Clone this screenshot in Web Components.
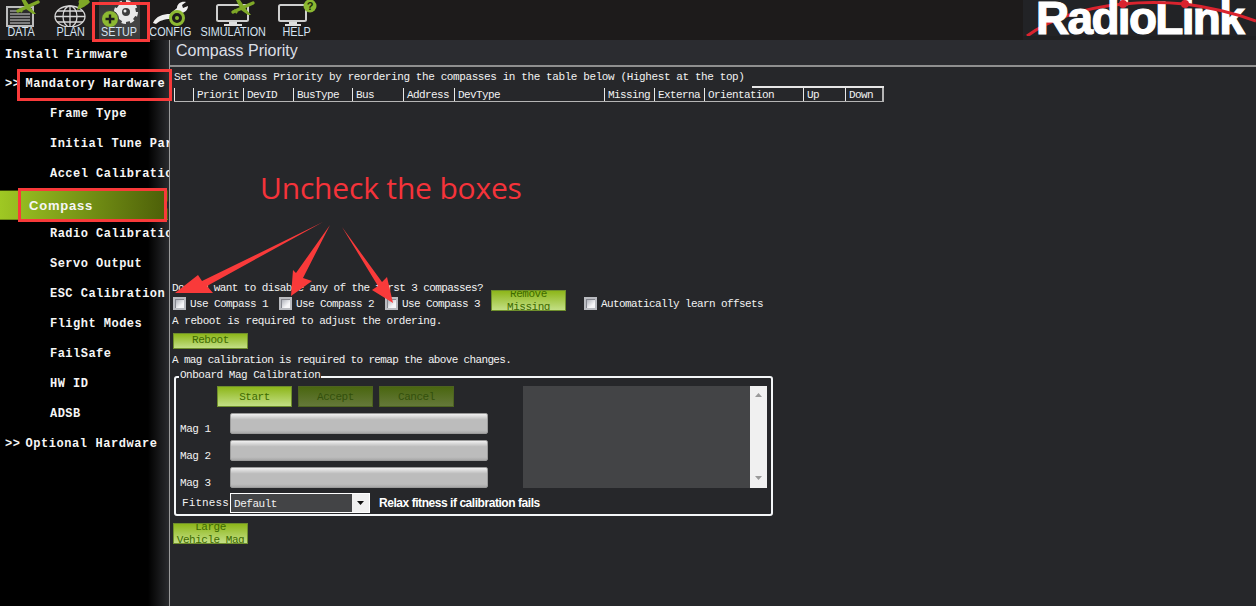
<!doctype html>
<html>
<head>
<meta charset="utf-8">
<title>Compass Priority</title>
<style>
html, body { margin: 0; height: 100%; background: #26272a; overflow: hidden; }
</style>
</head>
<body>
<mp-app></mp-app>

<script>
const MONO = `"Liberation Mono", "DejaVu Sans Mono", monospace`

// top bar button: label under a slotted icon
class MpTool extends HTMLElement {
  constructor() {
    super()
    this.attachShadow({ mode: 'open' }).innerHTML = `
<style>
:host { display: flex; flex-direction: column; align-items: center; height: 40px; width: var(--w, 50px); flex: none; box-sizing: border-box; }
:host([active]) { background: linear-gradient(#333, #444 60%, #3a3a3a); }
.icon { height: 27px; width: 100%; display: flex; justify-content: center; }
.label { font: 12px/14px "Liberation Sans", sans-serif; color: #d5e3f2; margin-top: -2px; transform: scaleX(.9); white-space: nowrap; }
</style>
<div class="icon"><slot></slot></div>
<div class="label"></div>`
    this.shadowRoot.querySelector('.label').textContent = this.getAttribute('label')
  }
}
customElements.define('mp-tool', MpTool)

class MpToolbar extends HTMLElement {
  constructor() {
    super()
    this.attachShadow({ mode: 'open' }).innerHTML = `
<style>
:host { display: flex; height: 40px; background: #1d1b1b; position: relative; overflow: hidden; }
.logo { margin-left: auto; width: 233px; background: #222326; position: relative; overflow: hidden; }
.logo svg { position: absolute; left: 0; top: 0; }
.name { position: relative; font: 700 46px/46px "Liberation Sans", sans-serif; color: #fff; letter-spacing: -1.7px; -webkit-text-stroke: 1.2px #fff; padding-left: 13px; margin-top: -5px; white-space: nowrap; }
.bottom { position: absolute; left: 0; right: 0; top: 36px; height: 4px; background: #1f2022; }
</style>
<slot></slot>
<div class="logo">
  <svg width="233" height="40"><path d="M4 36 Q40 10 100 4" fill="none" stroke="#d9232e" stroke-width="3"/></svg>
  <div class="name">RadioLink</div>
  <svg width="233" height="40"><path d="M100 4 Q130 1 162 4 Q200 9 233 21" fill="none" stroke="#d9232e" stroke-width="3"/><circle cx="100" cy="4" r="4" fill="#d9232e"/><circle cx="162" cy="4" r="4" fill="#d9232e"/></svg>
  <div class="bottom"></div>
</div>`
  }
}
customElements.define('mp-toolbar', MpToolbar)

class MpSideItem extends HTMLElement {
  constructor() {
    super()
    this.attachShadow({ mode: 'open' }).innerHTML = `
<style>
:host { display: flex; align-items: center; position: relative; height: 30px; box-sizing: border-box; white-space: nowrap; font: 700 12px/14px ${MONO}; letter-spacing: .48px; color: #f6f6f6; padding-left: 5px; }
:host([sub]) { padding-left: 50px; }
:host([first]) { height: 29px; }
:host([group]) { padding-left: 5px; letter-spacing: .56px; }
:host([selected]) {
  height: 30px; margin: 1px 0 -1px; padding: 2px 0 0 29px; width: 168px;
  font: 700 13px/14px "Liberation Sans", sans-serif; letter-spacing: .8px;
  background: linear-gradient(90deg, #9fc823, #4c5e08);
  border-top: 1px solid #3d4d08; border-bottom: 1px solid #6d8a16;
}
:host([selected])::after { content: ""; position: absolute; right: 0; top: 10px; border: 4px solid transparent; border-right: 4px solid #26272a; }
</style><slot></slot>`
  }
}
customElements.define('mp-side-item', MpSideItem)

class MpSidebar extends HTMLElement {
  constructor() {
    super()
    this.attachShadow({ mode: 'open' }).innerHTML = `
<style>
:host { display: block; width: 169px; flex: none; overflow: hidden; position: relative;
  background: linear-gradient(90deg, #000 148px, #2a2b2e 169px); }
</style><slot></slot>`
  }
}
customElements.define('mp-sidebar', MpSidebar)

class MpButton extends HTMLElement {
  constructor() {
    super()
    this.attachShadow({ mode: 'open' }).innerHTML = `
<style>
:host { display: flex; width: 75px; height: var(--h, 21px); box-sizing: border-box; flex: none; overflow: hidden; align-items: center; justify-content: center; text-align: center;
  border: 1px solid #6f8f2c; background: linear-gradient(#8db61a, #c3df85); color: #3d6a00;
  font: 11px/13px ${MONO}; letter-spacing: -.47px; white-space: nowrap; }
:host([disabled]) { background: linear-gradient(#4a6610, #65793a); color: #33500c; border-color: #4d6320; }
</style><span><slot></slot></span>`
  }
}
customElements.define('mp-button', MpButton)

class MpCheck extends HTMLElement {
  constructor() {
    super()
    this.attachShadow({ mode: 'open' }).innerHTML = `
<style>
:host { display: flex; align-items: center; height: 21px; box-sizing: border-box; padding-top: 6px; flex: none; white-space: nowrap; letter-spacing: -.6px; }
i { width: 13px; height: 13px; margin-right: 4px; box-sizing: border-box; border: 2px solid #b9bbc0; box-shadow: inset 1px 1px #84868e; background: linear-gradient(135deg, #a4a7b0, #f6f6f8 70%); }
</style><i></i><slot></slot>`
  }
}
customElements.define('mp-check', MpCheck)

class MpBar extends HTMLElement {
  constructor() {
    super()
    this.attachShadow({ mode: 'open' }).innerHTML = `
<style>
:host { display: block; width: 258px; height: 21px; box-sizing: border-box; border: 1px solid #9a9a9a; border-radius: 2px; background: linear-gradient(#f0f0f0, #bcbcbc 30%, #bcbcbc 85%, #a8a8a8); }
</style>`
  }
}
customElements.define('mp-bar', MpBar)

class MpCombo extends HTMLElement {
  constructor() {
    super()
    this.attachShadow({ mode: 'open' }).innerHTML = `
<style>
:host { display: flex; width: 140px; height: 20px; box-sizing: border-box; border: 1px solid #fff; background: #434446; flex: none; }
.text { flex: 1; padding: 1px 0 0 3px; line-height: 18px; }
.btn { width: 17px; background: #f0f0f0; display: flex; align-items: center; justify-content: center; }
.btn svg { display: block; }
</style>
<div class="text"><slot></slot></div>
<div class="btn"><svg width="7" height="4"><path d="M0 0h7L3.5 4z" fill="#111"/></svg></div>`
  }
}
customElements.define('mp-combo', MpCombo)

class MpTextbox extends HTMLElement {
  constructor() {
    super()
    this.attachShadow({ mode: 'open' }).innerHTML = `
<style>
:host { display: flex; width: 244px; height: 102px; flex: none; background: #434446; }
.bar { margin-left: auto; width: 17px; background: #f0f0f0; display: flex; flex-direction: column; justify-content: space-between; align-items: center; padding: 7px 0 8px; box-sizing: border-box; }
svg { display: block; }
</style>
<div class="bar">
  <svg width="7" height="4"><path d="M0 4h7L3.5 0z" fill="#9a9a9a"/></svg>
  <svg width="7" height="4"><path d="M0 0h7L3.5 4z" fill="#9a9a9a"/></svg>
</div>`
  }
}
customElements.define('mp-textbox', MpTextbox)

class MpGroup extends HTMLElement {
  constructor() {
    super()
    this.attachShadow({ mode: 'open' }).innerHTML = `
<style>
:host { display: block; position: relative; width: 599px; box-sizing: border-box; border: 2px solid #f4f6f8; border-radius: 3px; margin-left: 4px; padding-top: 8px; padding-bottom: 1px; }
.legend { position: absolute; top: -10px; left: 3px; background: #26272a; padding: 0 1px; line-height: 14px; white-space: nowrap; letter-spacing: -.5px; }
</style>
<div class="legend"></div><slot></slot>`
    this.shadowRoot.querySelector('.legend').textContent = this.getAttribute('legend')
  }
}
customElements.define('mp-group', MpGroup)

class MpCompassTable extends HTMLElement {
  constructor() {
    super()
    const cols = [['', 19], ['Priorit', 50], ['DevID', 50], ['BusType', 59], ['Bus', 51], ['Address', 51], ['DevType', 150], ['Missing', 50], ['Externa', 50], ['Orientation', 99], ['Up', 42], ['Down', 37]]
    this.attachShadow({ mode: 'open' }).innerHTML = `
<style>
:host { display: flex; position: relative; width: 710px; height: 16px; box-sizing: border-box; margin-left: 2px; border-bottom: 1px solid #b5b5b5; border-right: 2px solid #b5b5b5; letter-spacing: -.6px; }
:host::after { content: ""; position: absolute; left: 578px; right: -2px; top: 0; height: 2px; background: #e6e6e6; }
div { box-sizing: border-box; height: 13px; margin-top: 2px; border-left: 1px solid #e8e8e8; padding-left: 3px; line-height: 14px; overflow: hidden; white-space: nowrap; flex: none; }
</style>
${cols.map(([t, w]) => `<div style="width:${w}px">${t}</div>`).join('')}`
  }
}
customElements.define('mp-compass-table', MpCompassTable)

// the compass page, everything right of the sidebar
class MpCompassPage extends HTMLElement {
  constructor() {
    super()
    this.attachShadow({ mode: 'open' }).innerHTML = `
<style>
:host { display: block; flex: 1; min-width: 0; border-left: 1px solid #9a9a9a; box-sizing: border-box; background: #26272a; color: #f2f2f2; font: 11px/12px ${MONO}; letter-spacing: -.47px; }
.title { height: 25px; background: #2b2c30; border-bottom: 2px solid #8f8f8f; font: 16px/22px "Liberation Sans", sans-serif; letter-spacing: 0; color: #dcdfe6; padding-left: 6px; }
.body { padding-left: 2px; display: flex; flex-direction: column; align-items: flex-start; }
.line { margin-left: 2px; height: 12px; white-space: nowrap; }
.checks { display: flex; margin: -4px 0 0 1px; align-items: center; }
.row { display: flex; align-items: center; }
.main { display: flex; }
.left { width: 347px; flex: none; }
.bars { display: grid; grid-template-columns: 54px auto; grid-auto-rows: 21px; row-gap: 6px; margin-top: 6px; }
.bars span { padding: 10px 0 0 4px; }
.fit { display: flex; align-items: center; margin-top: 5px; }
.fit .name { width: 48px; padding-left: 6px; letter-spacing: .1px; }
.relax { margin-left: 9px; font: 700 12px/14px "Liberation Sans", sans-serif; letter-spacing: -.45px; color: #fff; }
.row mp-button { padding-top: 2px; }
</style>
<div class="title">Compass Priority</div>
<div class="body">
  <div class="line" style="margin-top:4px;letter-spacing:-.4px">Set the Compass Priority by reordering the compasses in the table below (Highest at the top)</div>
  <mp-compass-table style="margin-top:3px"></mp-compass-table>
  <div class="line" style="margin-top:180px;margin-left:0;letter-spacing:-.62px">Do you want to disable any of the first 3 compasses?</div>
  <div class="checks">
    <mp-check style="width:106px">Use Compass 1</mp-check>
    <mp-check style="width:106px">Use Compass 2</mp-check>
    <mp-check style="width:106px">Use Compass 3</mp-check>
    <mp-button style="margin-right:18px">Remove<br>Missing</mp-button>
    <mp-check>Automatically learn offsets</mp-check>
  </div>
  <div class="line" style="margin-top:4px;margin-left:0">A reboot is required to adjust the ordering.</div>
  <mp-button style="--h:16px;margin:6px 0 0 1px;padding-bottom:2px">Reboot</mp-button>
  <div class="line" style="margin-top:5px;margin-left:0;letter-spacing:-.65px">A mag calibration is required to remap the above changes.</div>
  <mp-group legend="Onboard Mag Calibration" style="margin-top:10px;margin-left:2px">
    <div class="main">
      <div class="left">
        <div class="row" style="gap:6px;padding-left:41px">
          <mp-button>Start</mp-button>
          <mp-button disabled>Accept</mp-button>
          <mp-button disabled>Cancel</mp-button>
        </div>
        <div class="bars">
          <span>Mag 1</span><mp-bar></mp-bar>
          <span>Mag 2</span><mp-bar></mp-bar>
          <span>Mag 3</span><mp-bar></mp-bar>
        </div>
      </div>
      <mp-textbox></mp-textbox>
    </div>
    <div class="fit">
      <span class="name">Fitness</span>
      <mp-combo>Default</mp-combo>
      <span class="relax">Relax fitness if calibration fails</span>
    </div>
  </mp-group>
  <mp-button style="margin:7px 0 0 1px">Large<br>Vehicle Mag</mp-button>
</div>`
  }
}
customElements.define('mp-compass-page', MpCompassPage)

// red callouts someone drew on top of the screenshot
class MpAnnotations extends HTMLElement {
  constructor() {
    super()
    this.attachShadow({ mode: 'open' }).innerHTML = `
<style>
:host { display: block; position: absolute; inset: 0; pointer-events: none; }
svg { position: absolute; left: 0; top: 0; }
.box { position: absolute; box-sizing: border-box; border: 3px solid #f93a3a; }
.say { position: absolute; left: 260px; top: 170px; font: 30px/36px "Open Sans", sans-serif; letter-spacing: -.18px; color: #f5333a; white-space: nowrap; }
</style>
<div class="box" style="left:92px;top:2px;width:58px;height:40px"></div>
<div class="box" style="left:17px;top:69px;width:155px;height:32px"></div>
<div class="box" style="left:18px;top:188px;width:149px;height:34px"></div>
<div class="say">Uncheck the boxes</div>
<svg width="1256" height="606" fill="#f93a3a">
  <polygon points="323,222 207,286 213,293 175,293 198,275 202,281"/>
  <polygon points="330,225 303,278 312,281 291,296 293,270 296,273"/>
  <polygon points="342,227 382,282 387,277 393,303 372,290 378,286"/>
</svg>`
  }
}
customElements.define('mp-annotations', MpAnnotations)

const PLANE = `<path d="M-10 4L10 -5" stroke="#7fa827" stroke-width="3.4" stroke-linecap="round"/><path d="M-7 -8L-3 -8L3 1L8 7L5 7L-2 2z" fill="#7fa827"/><path d="M-9 1L-7 6L-5 4z" fill="#7fa827"/>`

class MpApp extends HTMLElement {
  constructor() {
    super()
    const sub = ['Frame Type', 'Initial Tune Parameters', 'Accel Calibration']
    const sub2 = ['Radio Calibration', 'Servo Output', 'ESC Calibration', 'Flight Modes', 'FailSafe', 'HW ID', 'ADSB']
    this.attachShadow({ mode: 'open' }).innerHTML = `
<style>
:host { display: flex; flex-direction: column; position: relative; width: 1256px; height: 606px; overflow: hidden; }
.under { display: flex; flex: 1; min-height: 0; }
svg { display: block; }
.arrows { margin-right: 5px; }
</style>
<mp-toolbar>
  <mp-tool label="DATA" style="--w:43px">
    <svg width="43" height="27" viewBox="0 0 43 27"><rect x="7" y="7" width="26" height="19" fill="#2b2b2b" stroke="#bdbdbd" stroke-width="2"/><path d="M10 11h8M10 14h20M10 17h20M10 20h20M10 23h20" stroke="#cfcfcf" stroke-width="1.2"/><g transform="translate(28 7)">${PLANE}</g></svg>
  </mp-tool>
  <mp-tool label="PLAN" style="--w:56px">
    <svg width="56" height="27" viewBox="0 0 56 27"><g fill="none" stroke="#d6d6d6" stroke-width="1.3"><ellipse cx="27" cy="16.500" rx="15" ry="10.500"/><ellipse cx="27" cy="16.500" rx="7" ry="10.500"/><path d="M12 16.500h30M14 11h26M14 22h26M27 6v21"/></g><path d="M34 10L36 3.500a5 3.500 0 0 1 10 -3L47 2C45 5 39 8 34 10z" fill="#7fa827"/></svg>
  </mp-tool>
  <mp-tool label="SETUP" active style="--w:41px">
    <svg width="41" height="27" viewBox="0 0 41 27"><g fill="none" stroke="#e8e8e8"><circle cx="27" cy="12" r="7" stroke-width="6"/><circle cx="27" cy="12" r="10.500" stroke-width="3" stroke-dasharray="4.200 4"/></g><circle cx="26" cy="11" r="1.500" fill="#e8e8e8"/><circle cx="11" cy="19" r="8.500" fill="#8cb832" stroke="#3d3d3d" stroke-width="1"/><path d="M6.500 19h9M11 14.500v9" stroke="#1c1c1c" stroke-width="2.400"/></svg>
  </mp-tool>
  <mp-tool label="CONFIG" style="--w:60px">
    <svg width="60" height="27" viewBox="0 0 60 27"><path d="M13 23c3-7 10-9 17-9l7-6c0-4 4-7 9-6l-4 3 1 3 5-2c0 5-5 8-10 7l-7 6c-7 0-12 2-15 5z" fill="#efefef"/><circle cx="37" cy="18" r="6.500" fill="#1d1b1b" stroke="#8cb832" stroke-width="3"/><circle cx="37" cy="18" r="2" fill="#8cb832"/></svg>
  </mp-tool>
  <mp-tool label="SIMULATION" style="--w:67px">
    <svg width="67" height="27" viewBox="0 0 67 27"><rect x="17" y="5" width="31" height="16" rx="1.500" fill="none" stroke="#cfcfcf" stroke-width="2"/><path d="M29 22h8v2h-8zM24 24h18v2H24z" fill="#dedede"/><g transform="translate(43 8)">${PLANE}</g></svg>
  </mp-tool>
  <mp-tool label="HELP" style="--w:59px">
    <svg width="59" height="27" viewBox="0 0 59 27"><rect x="12" y="5" width="27" height="16" rx="1.500" fill="none" stroke="#cfcfcf" stroke-width="2"/><path d="M22 22h8v2h-8zM18 24h16v2H18z" fill="#dedede"/><circle cx="43" cy="6" r="6.500" fill="#8cb832"/><text x="43" y="10" font-family="Liberation Sans" font-weight="700" font-size="11" text-anchor="middle" fill="#1c2a08">?</text></svg>
  </mp-tool>
</mp-toolbar>
<div class="under">
  <mp-sidebar>
    <mp-side-item first>Install Firmware</mp-side-item>
    <mp-side-item group><span class="arrows">&gt;&gt;</span>Mandatory Hardware</mp-side-item>
    ${sub.map(s => `<mp-side-item sub>${s}</mp-side-item>`).join('')}
    <mp-side-item selected>Compass</mp-side-item>
    ${sub2.map(s => `<mp-side-item sub>${s}</mp-side-item>`).join('')}
    <mp-side-item group><span class="arrows">&gt;&gt;</span>Optional Hardware</mp-side-item>
  </mp-sidebar>
  <mp-compass-page></mp-compass-page>
</div>
<mp-annotations></mp-annotations>`
  }
}
customElements.define('mp-app', MpApp)
</script>
</body>
</html>
